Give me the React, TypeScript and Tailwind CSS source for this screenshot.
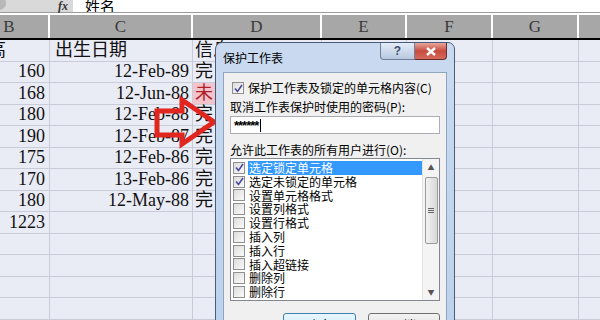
import React from "react"

const cols = [
  { key: "B", w: "w-[80px]" },
  { key: "C", w: "w-[143px]" },
  { key: "D", w: "w-[129px]" },
  { key: "E", w: "w-[85px]" },
  { key: "F", w: "w-[86px]" },
  { key: "G", w: "w-[86px]" },
  { key: "", w: "w-[80px]" },
]

const rows: { b: string; c: string; d: string; bad?: boolean; head?: boolean }[] = [
  { b: "身高", c: "出生日期", d: "信息", head: true },
  { b: "160", c: "12-Feb-89", d: "完" },
  { b: "168", c: "12-Jun-88", d: "未", bad: true },
  { b: "180", c: "12-Feb-88", d: "完" },
  { b: "190", c: "12-Feb-87", d: "完" },
  { b: "175", c: "12-Feb-86", d: "完" },
  { b: "170", c: "13-Feb-86", d: "完" },
  { b: "180", c: "12-May-88", d: "完" },
  { b: "1223", c: "", d: "" },
  { b: "", c: "", d: "" },
  { b: "", c: "", d: "" },
  { b: "", c: "", d: "" },
  { b: "", c: "", d: "" },
]

const perms = [
  { t: "选定锁定单元格", on: true, sel: true },
  { t: "选定未锁定的单元格", on: true },
  { t: "设置单元格格式" },
  { t: "设置列格式" },
  { t: "设置行格式" },
  { t: "插入列" },
  { t: "插入行" },
  { t: "插入超链接" },
  { t: "删除列" },
  { t: "删除行" },
]

const cellFont = { fontFamily: "'Liberation Serif', 'Noto Sans CJK SC', serif" }
const uiFont = { fontFamily: "'Noto Sans CJK SC', 'Liberation Sans', sans-serif" }

function Check({ on }: { on?: boolean }) {
  return (
    <span className="w-[12px] h-[12px] shrink-0 border border-[#8f8f8f] bg-gradient-to-br from-[#dcdcdc] to-[#fbfbfb] flex items-center justify-center">
      {on && (
        <svg width="9" height="9" viewBox="0 0 9 9">
          <path d="M1 4.5 L3.5 7.5 L8 1" fill="none" stroke="#4a4a9a" strokeWidth="1.6" />
        </svg>
      )}
    </span>
  )
}

export default function App() {
  return (
    <div className="relative w-[600px] h-[320px] overflow-hidden bg-[#e9ebf5]">
      {/* formula bar */}
      <div className="flex h-[13px] border-b border-[#9a9a9a]">
        <div className="w-[73px] bg-[#d9d9d9] relative flex items-center justify-end pr-[5px]">
          <span className="absolute left-[-8px] top-[-4px] w-[14px] h-[14px] rounded-full bg-[#b8b8b8]" />
          <span className="italic text-[12px] leading-none text-[#333] font-bold" style={cellFont}>fx</span>
        </div>
        <div className="flex-1 bg-white pl-[12px] text-[15px] leading-[12px] text-black overflow-hidden" style={uiFont}>
          姓名
        </div>
      </div>
      <div className="h-[2px] bg-white" />

      <div className="ml-[-30px]">
        {/* column headers */}
        <div className="flex h-[25px] bg-[#a7a7a7] border-b-2 border-black">
          {cols.map((c, i) => (
            <div
              key={i}
              className={`${c.w} shrink-0 border-r-2 border-white flex items-center justify-center text-[17px] text-[#3a3a3a]`}
              style={cellFont}
            >
              {c.key}
            </div>
          ))}
        </div>

        {/* body */}
        {rows.map((r, i) => (
          <div key={i} className="flex h-[21.5px] border-b border-[#cacbd8] text-[18px] text-[#111]" style={cellFont}>
            <div className={`w-[80px] shrink-0 border-r border-[#cacbd8] flex items-center ${r.head ? "justify-start" : "justify-end pr-[4px]"}`}>
              {r.b}
            </div>
            <div className={`w-[143px] shrink-0 border-r border-[#cacbd8] flex items-center ${r.head ? "justify-start pl-[5px]" : "justify-end pr-[3px]"}`}>
              {r.c}
            </div>
            <div className={`w-[129px] shrink-0 border-r border-[#cacbd8] flex items-center pl-[2px] ${r.bad ? "bg-[#f3c4cc] text-[#b0202a]" : ""}`}>
              {r.d}
            </div>
            <div className="w-[85px] shrink-0 border-r border-[#cacbd8]" />
            <div className="w-[86px] shrink-0 border-r border-[#cacbd8]" />
            <div className="w-[86px] shrink-0 border-r border-[#cacbd8]" />
            <div className="w-[80px] shrink-0" />
          </div>
        ))}
      </div>

      {/* red arrow */}
      <svg className="absolute left-[150px] top-[95px]" width="72" height="60" viewBox="0 0 72 60">
        <path d="M7 16 L32 16 L32 5 L64 27 L32 49 L32 40 L7 40 Z" fill="none" stroke="#e1251f" strokeWidth="5" strokeLinejoin="miter" />
      </svg>

      {/* dialog */}
      <div className="absolute left-[215px] top-[42px] w-[240px] h-[300px] rounded-t-[7px] border border-[#4a5d78] bg-gradient-to-b from-[#c9daf0] to-[#bcd1ec] px-[7px]">
        <div className="relative h-[29px] pt-[7px]">
          <div className="text-[12px] leading-[16px] text-black" style={uiFont}>保护工作表</div>
          <div className="absolute right-[0px] top-[0px] flex">
            <div className="w-[35px] h-[17px] rounded-bl-[4px] border border-[#6d7f99] border-t-0 bg-gradient-to-b from-[#e4ecf7] to-[#b8c9e0] flex items-center justify-center text-[12px] font-bold text-[#3d4f6a]" style={{ fontFamily: "'Liberation Sans', sans-serif" }}>
              ?
            </div>
            <div className="w-[32px] h-[17px] rounded-br-[4px] border border-[#6b2a2a] border-t-0 border-l-0 bg-gradient-to-b from-[#e8a59c] via-[#c74b3e] to-[#d66a5c] flex items-center justify-center">
              <svg width="12" height="9" viewBox="0 0 12 9">
                <path d="M2 1 L10 8 M10 1 L2 8" stroke="white" strokeWidth="2.4" />
              </svg>
            </div>
          </div>
        </div>

        <div className="h-[260px] bg-[#f0f0f0] border border-[#8fa4bf] px-[6px] pt-[5px] text-[12px] text-black" style={uiFont}>
          <div className="flex items-center gap-[4px] h-[20px] pl-[2px] whitespace-nowrap">
            <Check on />
            <span className="leading-[16px]">保护工作表及锁定的单元格内容(C)</span>
          </div>
          <div className="h-[17px] leading-[17px] whitespace-nowrap">取消工作表保护时使用的密码(P):</div>
          <div className="mt-[1px] h-[18px] bg-white border border-[#abadb3] flex items-center pl-[3px] text-[13px] leading-none tracking-[-1px] font-bold" style={{ fontFamily: "'Liberation Sans', sans-serif" }}>
            ******<span className="w-px h-[13px] bg-black ml-[2px]" />
          </div>
          <div className="mt-[7px] h-[17px] leading-[17px] whitespace-nowrap">允许此工作表的所有用户进行(O):</div>
          <div className="h-[143px] bg-white border border-[#828790] flex">
            <div className="flex-1 pt-[2px] pl-[2px]">
              {perms.map((p) => (
                <div key={p.t} className="flex items-center h-[13.8px] gap-[3px]">
                  <Check on={p.on} />
                  <span className={`flex-1 h-full text-[12px] leading-[13.8px] pl-[1px] whitespace-nowrap ${p.sel ? "bg-[#3399ff] text-white" : ""}`}>{p.t}</span>
                </div>
              ))}
            </div>
            <div className="w-[17px] bg-[#f4f4f4] border-l border-[#e6e6e6] flex flex-col items-center py-[3px]">
              <span className="text-[7px] text-[#555] leading-[10px]">▲</span>
              <div className="mt-[5px] w-[13px] h-[67px] rounded-[2px] border border-[#9a9a9a] bg-gradient-to-r from-[#f2f2f2] to-[#d8d8d8] flex flex-col items-center justify-center gap-[1px]">
                <span className="w-[6px] h-px bg-[#666]" />
                <span className="w-[6px] h-px bg-[#666]" />
                <span className="w-[6px] h-px bg-[#666]" />
              </div>
              <span className="mt-auto text-[7px] text-[#555] leading-[10px]">▼</span>
            </div>
          </div>
          <div className="mt-[12px] flex gap-[12px] pl-[53px]">
            <div className="w-[73px] h-[23px] rounded-[3px] border border-[#3c7fb1] bg-gradient-to-b from-[#eaf6fd] to-[#bee6fd] flex items-center justify-center">确定</div>
            <div className="w-[73px] h-[23px] rounded-[3px] border border-[#707070] bg-gradient-to-b from-[#f2f2f2] to-[#dddddd] flex items-center justify-center">取消</div>
          </div>
        </div>
      </div>
    </div>
  )
}
